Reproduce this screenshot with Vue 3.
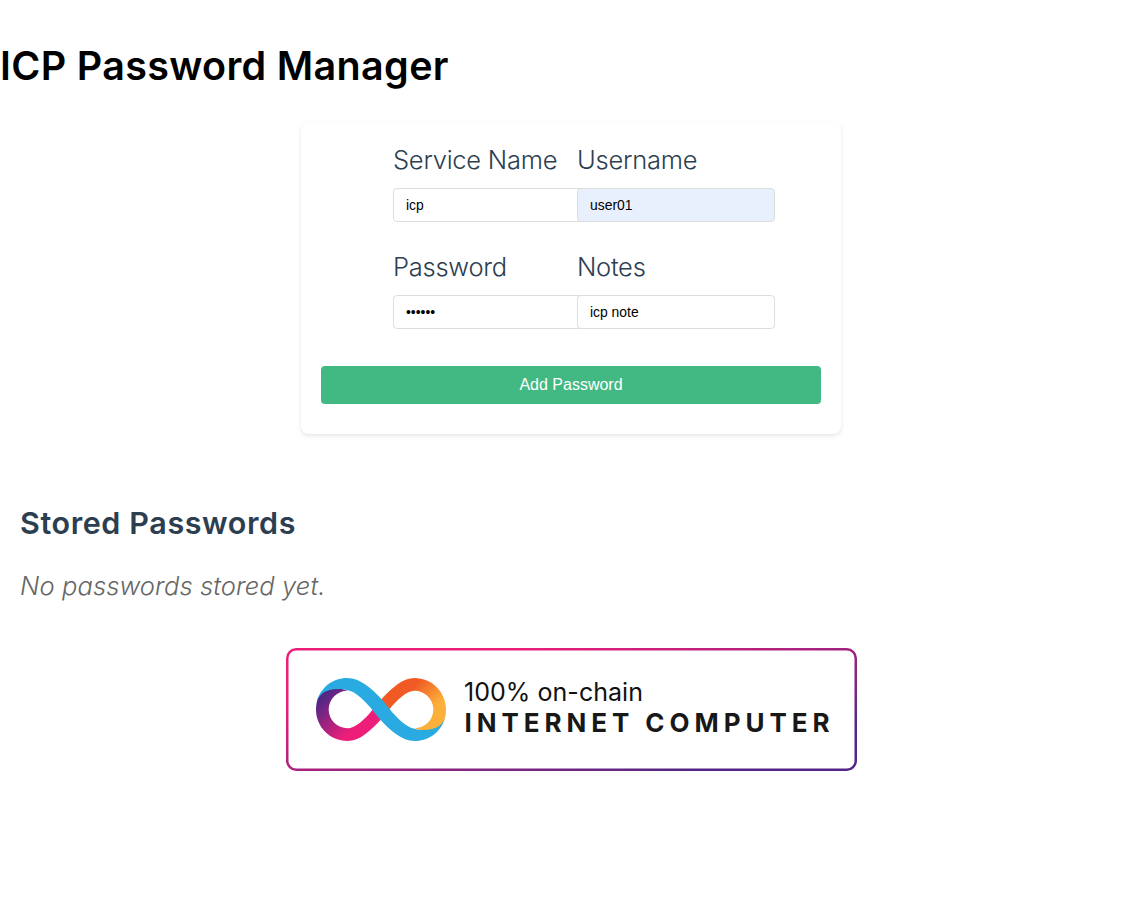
<script setup>
import { reactive } from 'vue'

const fields = reactive([
  { id: 'service', label: 'Service Name', type: 'text', value: 'icp' },
  { id: 'username', label: 'Username', type: 'text', value: 'user01', filled: true },
  { id: 'password', label: 'Password', type: 'password', value: 'secret' },
  { id: 'notes', label: 'Notes', type: 'text', value: 'icp note' },
])
</script>

<template>
  <main class="page">
    <h1 class="title">ICP Password Manager</h1>

    <form class="card" @submit.prevent>
      <div class="fields">
        <div v-for="f in fields" :key="f.id" class="field">
          <label :for="f.id" :class="f.id">{{ f.label }}</label>
          <input :id="f.id" v-model="f.value" :type="f.type" :class="{ filled: f.filled }" autocomplete="off" />
        </div>
      </div>
      <button type="submit">Add Password</button>
    </form>

    <section class="stored">
      <h2>Stored Passwords</h2>
      <p>No passwords stored yet.</p>
    </section>

    <svg class="badge" width="572" height="124" viewBox="0 0 572 124" role="img">
      <defs>
        <linearGradient id="frame" x1="0" y1="0" x2="1" y2="0.9">
          <stop offset="0.21" stop-color="#ed1e79" />
          <stop offset="0.89" stop-color="#522785" />
        </linearGradient>
        <linearGradient id="orange" gradientUnits="userSpaceOnUse" x1="81.5" y1="5.4" x2="126" y2="50.5">
          <stop offset="0.21" stop-color="#f15a24" />
          <stop offset="0.68" stop-color="#fbb03b" />
        </linearGradient>
        <linearGradient id="purple" gradientUnits="userSpaceOnUse" x1="48.5" y1="57.6" x2="4" y2="12.5">
          <stop offset="0.21" stop-color="#ed1e79" />
          <stop offset="0.89" stop-color="#522785" />
        </linearGradient>
      </defs>
      <rect x="2.25" y="2.25" width="568.5" height="120.5" rx="9" fill="#fff" stroke="url(#frame)" stroke-width="2.5" />
      <g transform="translate(31 31)">
        <path fill="url(#orange)" d="M98.5 0C116 0 130 14 130 31.5C130 34 129.8 36.3 129.3 38.5C127 53 110 55 98.5 50.3A18.8 18.8 0 0 0 98.5 12.7C91 12.7 81 21.5 73.3 31.5L65 21.5C76 10 86 0 98.5 0Z" />
        <path fill="url(#purple)" d="M31.5 63C14 63 0 49 0 31.5C0 29 .2 26.7 .7 24.5C3 10 20 8 31.5 12.7A18.8 18.8 0 0 0 31.5 50.3C39 50.3 49 41.5 56.7 31.5L65 41.5C54 53 44 63 31.5 63Z" />
        <path fill="#29abe2" d="M.7 24.5C4 10 16 0 31.5 0C44 0 56 10.5 66.3 22L73.5 31C81 40 91 50 98.5 50.7C101 51.5 104 52 107 52C122 52.2 128 45 129.3 38.5C126 53 114 63 98.5 63C86 63 74 52.5 63.7 41L56.5 32C49 23 39 13 31.5 12.3C29 11.5 26 11 23 11C8 10.8 2 18 .7 24.5Z" />
      </g>
      <text class="tag" x="179" y="53.5" textLength="179">100% on-chain</text>
      <text class="name" x="179.5" y="85" textLength="365">INTERNET COMPUTER</text>
    </svg>
  </main>
</template>

<style>
body {
  background: #fff;
}
</style>

<style scoped>
.page {
  display: flex;
  flex-direction: column;
  font-family: Inter, "Noto Sans", sans-serif;
  color: #2c3e50;
}
.title {
  margin: 41px 0 0;
  font-size: 39.5px;
  line-height: 50px;
  font-weight: 600;
  letter-spacing: 0.32px;
  color: #000;
}
.card {
  box-sizing: border-box;
  align-self: center;
  width: 540px;
  height: 312px;
  margin-top: 31px;
  padding: 20px 20px 30px;
  border-radius: 8px;
  box-shadow: 0 2px 4px rgba(0, 0, 0, 0.1);
}
.fields {
  display: grid;
  grid-template-columns: 164px 164px;
  column-gap: 20px;
  row-gap: 27px;
  margin-left: 72px;
}
.field {
  display: flex;
  flex-direction: column;
  height: 80px;
}
label {
  height: 36px;
  margin-bottom: 10px;
  font-size: 25.5px;
  line-height: 36px;
  font-weight: 350;
  letter-spacing: -0.25px;
  white-space: nowrap;
}
input {
  box-sizing: border-box;
  width: 198px;
  height: 34px;
  padding: 0 12px;
  border: 1px solid #ddd;
  border-radius: 4px;
  background: #fff;
  color: #000;
  font: 13.9px "Liberation Sans", Arial, sans-serif;
  outline: none;
}
input.filled {
  background: #e8f0fe;
}
button {
  display: block;
  width: 500px;
  height: 38px;
  margin-top: 37px;
  padding: 0;
  border: 0;
  border-radius: 4px;
  background: #42b983;
  color: #fff;
  font: 16px "Liberation Sans", Arial, sans-serif;
}
.stored {
  margin: 69px 20px 0;
}
h2 {
  margin: 0;
  font-size: 30.5px;
  line-height: 40px;
  font-weight: 600;
  letter-spacing: 0.6px;
}
p {
  margin: 23px 0 0;
  font-size: 25.5px;
  line-height: 40px;
  font-weight: 350;
  font-style: italic;
  letter-spacing: 0.1px;
  color: #666;
}
.badge {
  display: block;
  align-self: center;
  margin-top: 41px;
}
.tag {
  font-size: 25px;
  font-weight: 400;
  fill: #111;
}
.name {
  font-size: 26px;
  font-weight: 700;
  fill: #181818;
}
</style>
